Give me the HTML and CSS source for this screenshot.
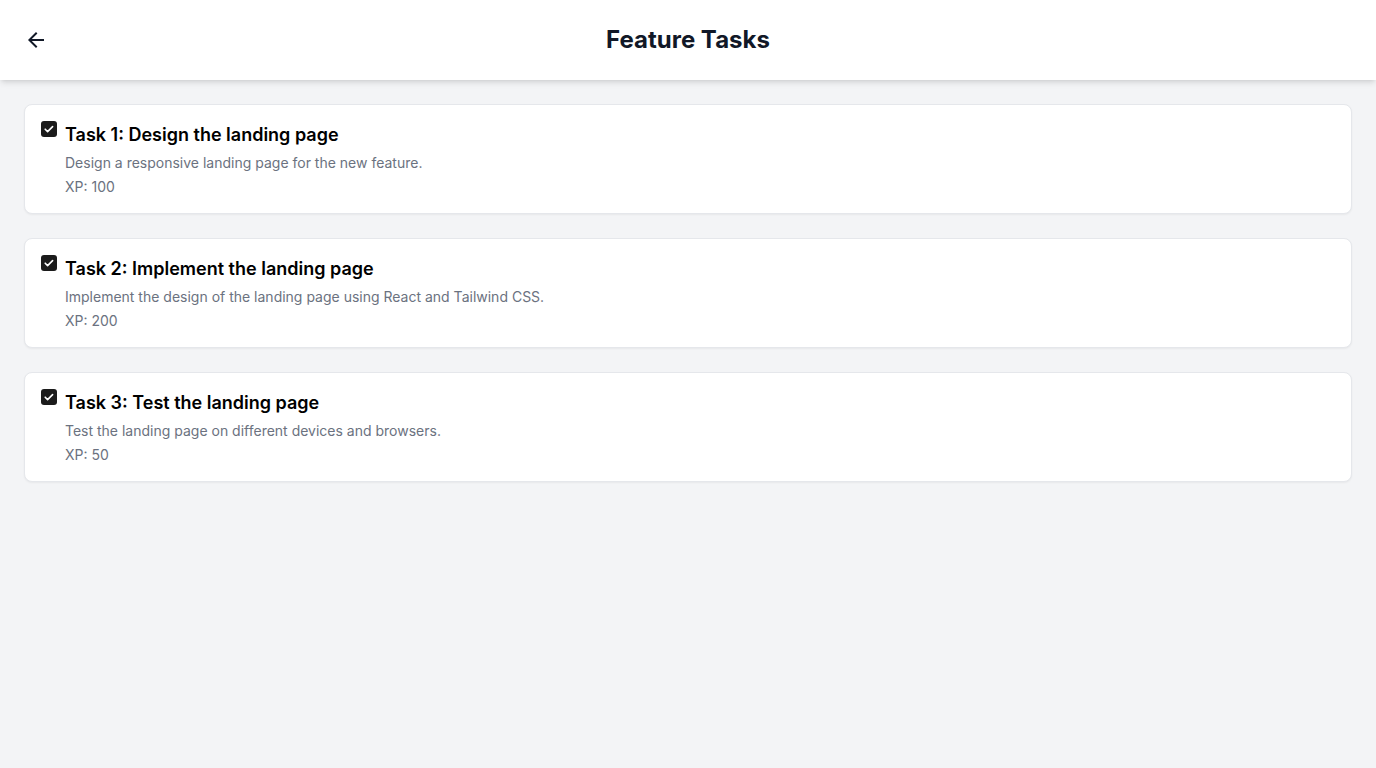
FILE: index.html
```html
<!DOCTYPE html>
<html lang="en">
<head>
<meta charset="utf-8">
<title>Feature Tasks</title>
<link rel="stylesheet" href="styles.css">
</head>
<body>
<header class="topbar">
  <button class="back" aria-label="Back">
    <svg width="24" height="24" viewBox="0 0 24 24"><path d="M20 11H7.83l5.59-5.59L12 4l-8 8 8 8 1.41-1.41L7.83 13H20v-2z" fill="#111827"/></svg>
  </button>
  <h1 class="title">Feature Tasks</h1>
  <span class="spacer"></span>
</header>
<main class="tasks">
  <div class="card">
    <span class="check"><svg width="16" height="16" viewBox="0 0 16 16"><path d="M4.2 8.2l2.4 2.4 5-5" fill="none" stroke="#fff" stroke-width="1.6" stroke-linecap="round" stroke-linejoin="round"/></svg></span>
    <div class="body">
      <h2 class="task-title">Task 1: Design the landing page</h2>
      <p class="desc">Design a responsive landing page for the new feature.</p>
      <p class="xp">XP: 100</p>
    </div>
  </div>
  <div class="card">
    <span class="check"><svg width="16" height="16" viewBox="0 0 16 16"><path d="M4.2 8.2l2.4 2.4 5-5" fill="none" stroke="#fff" stroke-width="1.6" stroke-linecap="round" stroke-linejoin="round"/></svg></span>
    <div class="body">
      <h2 class="task-title">Task 2: Implement the landing page</h2>
      <p class="desc">Implement the design of the landing page using React and Tailwind CSS.</p>
      <p class="xp">XP: 200</p>
    </div>
  </div>
  <div class="card">
    <span class="check"><svg width="16" height="16" viewBox="0 0 16 16"><path d="M4.2 8.2l2.4 2.4 5-5" fill="none" stroke="#fff" stroke-width="1.6" stroke-linecap="round" stroke-linejoin="round"/></svg></span>
    <div class="body">
      <h2 class="task-title">Task 3: Test the landing page</h2>
      <p class="desc">Test the landing page on different devices and browsers.</p>
      <p class="xp">XP: 50</p>
    </div>
  </div>
</main>
</body>
</html>
```
FILE: styles.css
```css
* { box-sizing: border-box; }
html, body { margin: 0; padding: 0; }
body {
  font-family: Inter, "Noto Sans", "Liberation Sans", sans-serif;
  background: #f3f4f6;
  min-height: 768px;
  color: #111827;
}
.topbar {
  height: 80px;
  background: #fff;
  display: flex;
  align-items: center;
  justify-content: space-between;
  padding: 0 24px;
  box-shadow: 0 4px 6px -1px rgba(0,0,0,0.1), 0 2px 4px -2px rgba(0,0,0,0.1);
  position: relative;
}
.back {
  width: 24px;
  height: 24px;
  padding: 0;
  border: 0;
  background: none;
  display: flex;
}
.spacer { width: 24px; }
.title {
  margin: 0;
  font-size: 24px;
  line-height: 32px;
  font-weight: 700;
  color: #111827;
}
.tasks {
  padding: 24px;
  display: flex;
  flex-direction: column;
  gap: 24px;
}
.card {
  background: #fff;
  border: 1px solid #e5e7eb;
  border-radius: 8px;
  box-shadow: 0 1px 2px 0 rgba(0,0,0,0.05);
  padding: 16px;
  display: flex;
  gap: 8px;
  align-items: flex-start;
}
.check {
  width: 16px;
  height: 16px;
  border-radius: 3px;
  background: #1b1b1b;
  display: flex;
  flex-shrink: 0;
}
.task-title {
  margin: 0;
  font-size: 18px;
  line-height: 28px;
  font-weight: 600;
  color: #000;
}
.desc, .xp {
  margin: 4px 0 0;
  font-size: 14px;
  line-height: 20px;
  color: #6b7280;
}
```
